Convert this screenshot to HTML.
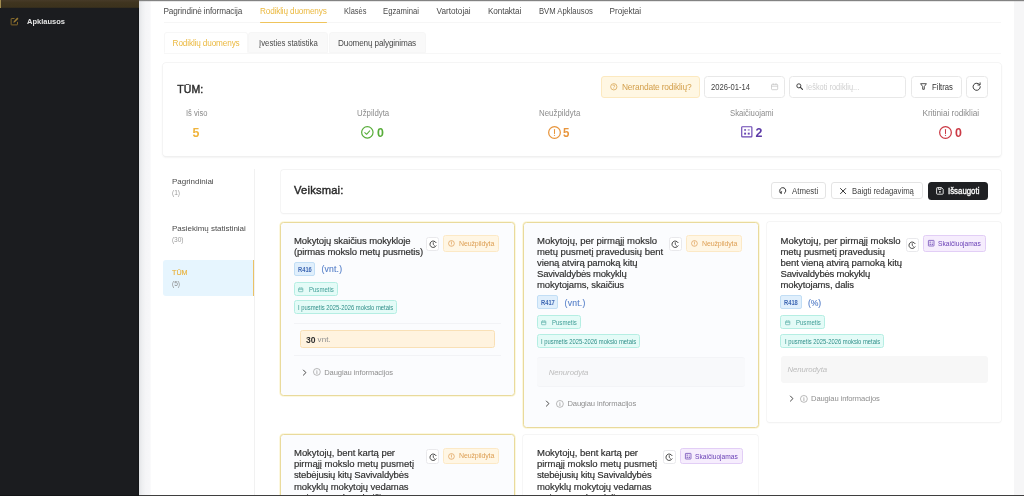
<!DOCTYPE html>
<html lang="lt">
<head>
<meta charset="utf-8">
<title>Rodiklių duomenys</title>
<style>
html,body{margin:0;padding:0}
body{width:1024px;height:496px;overflow:hidden;background:#fff;position:relative;font-family:"Liberation Sans", sans-serif;}
div,svg,span.t,.abs{position:absolute;box-sizing:border-box}
span.t{white-space:pre;line-height:14px;height:14px;transform-origin:0 50%}
svg{overflow:visible}
#app{position:absolute;left:0;top:0;width:1024px;height:496px;overflow:hidden;will-change:transform}
</style>
</head>
<body>
<main id="app">
<aside class="abs" style="left:0;top:0;width:139px;height:496px;background:linear-gradient(90deg,#1b1c1f,#1b1c1f 137px,#141517)">
<div style="left:0px;top:0px;width:139px;height:8px;background:linear-gradient(#473b28,#3f341f 35%,#3c321d 85%,#2f2a1e)"></div>
<div style="left:0px;top:0px;width:1.3px;height:7.6px;background:#a08a4e"></div>
<svg style="left:9.6px;top:16.6px" width="9" height="9" viewBox="0 0 24 24" ><path d="M20 13v7a1 1 0 0 1-1 1H4a1 1 0 0 1-1-1V5a1 1 0 0 1 1-1h8" fill="none" stroke="#86692a" stroke-width="2.6"/><path d="M9 15l1-4 9.5-9.5 3 3L13 14z" fill="#9a7b33"/></svg>
<span class="t" style="left:26.8px;top:15.32px;font-size:8px;color:#e4e4e4;transform:scaleX(0.939);font-weight:700;">Apklausos</span>
</aside>
<div style="left:139px;top:0px;width:12px;height:496px;background:linear-gradient(90deg,#e2e3e6,#eeeff1 25%,#f5f5f7 55%,#f7f7f9 90%,#fcfcfd)"></div>
<div style="left:1014px;top:0px;width:10px;height:496px;background:#f6f6f7"></div>
<div style="left:139px;top:0px;width:885px;height:1.1px;background:linear-gradient(#777,#8e8e8e)"></div>
<div style="left:139px;top:1.1px;width:885px;height:0.9px;background:linear-gradient(rgba(150,150,150,.45),rgba(200,200,200,0))"></div>
<nav class="abs" style="left:0;top:0">
<span class="t" style="left:163.5px;top:4.94px;font-size:8.2px;color:#4a4a4a;letter-spacing:-0.105px;">Pagrindinė informacija</span>
<span class="t" style="left:260px;top:4.94px;font-size:8.2px;color:#ebb940;letter-spacing:-0.152px;">Rodiklių duomenys</span>
<span class="t" style="left:343.6px;top:4.94px;font-size:8.2px;color:#4a4a4a;transform:scaleX(0.9114);">Klasės</span>
<span class="t" style="left:383.2px;top:4.94px;font-size:8.2px;color:#4a4a4a;transform:scaleX(0.9416);">Egzaminai</span>
<span class="t" style="left:436.6px;top:4.94px;font-size:8.2px;color:#4a4a4a;">Vartotojai</span>
<span class="t" style="left:488px;top:4.94px;font-size:8.2px;color:#4a4a4a;letter-spacing:-0.105px;">Kontaktai</span>
<span class="t" style="left:538.8px;top:4.94px;font-size:8.2px;color:#4a4a4a;transform:scaleX(0.9382);">BVM Apklausos</span>
<span class="t" style="left:609.6px;top:4.94px;font-size:8.2px;color:#4a4a4a;letter-spacing:-0.051px;">Projektai</span>
<div style="left:163.5px;top:22.1px;width:837.0px;height:1.0px;background:#f6f6f6"></div>
<div style="left:260px;top:22.1px;width:66.8px;height:1.4px;background:#efc45c;border-radius:1px"></div>
</nav>
<div style="left:163.5px;top:52.6px;width:837.0px;height:0.8px;background:#f7f7f7"></div>
<div style="left:163.5px;top:32px;width:84.5px;height:21.4px;background:#fff;border:0.8px solid #f7f7f7;border-bottom-color:#fff;border-radius:3px 3px 0 0"></div>
<div style="left:248.2px;top:32px;width:80.2px;height:21.2px;background:#f9f9f9;border:0.8px solid #f6f6f6;border-radius:3px 3px 0 0"></div>
<div style="left:328.8px;top:32px;width:97.4px;height:21.2px;background:#f9f9f9;border:0.8px solid #f6f6f6;border-radius:3px 3px 0 0"></div>
<span class="t" style="left:172.6px;top:36.74px;font-size:8.2px;color:#ebb940;letter-spacing:-0.129px;">Rodiklių duomenys</span>
<span class="t" style="left:259.2px;top:36.74px;font-size:8.2px;color:#4a4a4a;transform:scaleX(0.9501);">Įvesties statistika</span>
<span class="t" style="left:338px;top:36.74px;font-size:8.2px;color:#4a4a4a;letter-spacing:-0.159px;">Duomenų palyginimas</span>
<div style="left:163.3px;top:62.5px;width:837.5px;height:93.3px;background:#fff;border-radius:3px;box-shadow:0 0 0 .7px #f2f2f2,0 1px 2.500px rgba(0,0,0,.10),0 1px 2px rgba(0,0,0,.04)"></div>
<span class="t" style="left:177.2px;top:82.44px;font-size:10.5px;color:#2b2b2b;letter-spacing:0.132px;-webkit-text-stroke:.42px #2b2b2b;">TŪM:</span>
<div style="left:601.2px;top:76px;width:98.6px;height:21.6px;background:#fff7e3;border:0.8px solid #fce9c0;border-radius:3px"></div>
<svg style="left:610px;top:83.3px" width="7.6" height="7.6" viewBox="0 0 24 24" ><circle cx="12" cy="12" r="10" fill="none" stroke="#d6a24e" stroke-width="2.4"/><path d="M9 9.5a3 3 0 1 1 4.2 2.7c-.8.4-1.2 1-1.2 1.8v.5" fill="none" stroke="#d6a24e" stroke-width="2.2"/><circle cx="12" cy="17.6" r="1.4" fill="#d6a24e"/></svg>
<span class="t" style="left:621.9px;top:79.66px;font-size:8.4px;color:#d39f4b;letter-spacing:-0.16px;">Nerandate rodiklių?</span>
<div style="left:704.4px;top:76px;width:80.4px;height:21.6px;background:#fff;border:0.8px solid #e8e8e8;border-radius:3.5px"></div>
<span class="t" style="left:710.8px;top:80.54px;font-size:8.2px;color:#444;transform:scaleX(0.931);">2026-01-14</span>
<svg style="left:771.4px;top:82.8px" width="7.2" height="7.2" viewBox="0 0 14 14" ><rect x="1" y="2.600" width="12" height="10.400" rx="1.400" fill="none" stroke="#c6c6c6" stroke-width="1.500"/><path d="M1 6.200h12M4.300 .800v3M9.700 .800v3" stroke="#c6c6c6" stroke-width="1.500" fill="none"/></svg>
<div style="left:789.3px;top:76px;width:117.1px;height:21.6px;background:#fff;border:0.8px solid #e8e8e8;border-radius:3.5px"></div>
<svg style="left:796.2px;top:83.2px" width="7" height="7" viewBox="0 0 14 14" ><circle cx="5.700" cy="5.700" r="4.100" fill="none" stroke="#383838" stroke-width="1.900"/><path d="M8.900 8.900L12.900 12.900" stroke="#383838" stroke-width="2.300" stroke-linecap="round"/></svg>
<span class="t" style="left:805.8px;top:80.54px;font-size:8.2px;color:#cfcfcf;transform:scaleX(0.9063);">Ieškoti rodiklių...</span>
<div style="left:911.2px;top:76px;width:50.4px;height:21.6px;background:#fff;border:0.8px solid #e8e8e8;border-radius:3.5px"></div>
<svg style="left:920.1px;top:83.3px" width="7" height="7" viewBox="0 0 14 14" ><path d="M1.200 1.400h11.600l-4.200 5.800v5.400h-3.200v-5.400z" fill="none" stroke="#333" stroke-width="1.700" stroke-linejoin="round"/></svg>
<span class="t" style="left:931.9px;top:80.15px;font-size:8.3px;color:#333;transform:scaleX(0.925);">Filtras</span>
<div style="left:966.2px;top:76px;width:21.4px;height:21.6px;background:#fff;border:0.8px solid #e8e8e8;border-radius:3.5px"></div>
<svg style="left:972.3px;top:82.05px" width="9.4" height="9.4" viewBox="0 0 18.800 18.800" ><path d="M15.300 5.400A7.200 7.200 0 1 0 16.600 9.400" fill="none" stroke="#333" stroke-width="1.900" stroke-linecap="round"/><path d="M16.200 1.600v4.400h-4.400" fill="none" stroke="#333" stroke-width="1.900" stroke-linecap="round" stroke-linejoin="round"/></svg>
<span class="t" style="left:185.6px;top:106.05px;font-size:8.3px;color:#8c8c8c;transform:scaleX(0.91);">Iš viso</span>
<span class="t" style="left:192.6px;top:125.92px;font-size:12.4px;color:#f0b43c;letter-spacing:-0.106px;font-weight:700;">5</span>
<span class="t" style="left:356.6px;top:106.05px;font-size:8.3px;color:#8c8c8c;transform:scaleX(0.9436);">Užpildyta</span>
<svg style="left:361px;top:126.1px" width="12.7" height="12.7" viewBox="0 0 24 24" ><circle cx="12" cy="12" r="10.800" fill="none" stroke="#58ad3a" stroke-width="2.300"/><path d="M7.200 12.400l3.300 3.300 6-6.600" fill="none" stroke="#58ad3a" stroke-width="1.9" stroke-linecap="round" stroke-linejoin="round"/></svg>
<span class="t" style="left:376.9px;top:125.92px;font-size:12.4px;color:#58ad3a;letter-spacing:-0.306px;font-weight:700;">0</span>
<span class="t" style="left:538.7px;top:106.05px;font-size:8.3px;color:#8c8c8c;transform:scaleX(0.9525);">Neužpildyta</span>
<svg style="left:547.9px;top:126px" width="13" height="13" viewBox="0 0 24 24" ><circle cx="12" cy="12" r="10.800" fill="none" stroke="#e8953c" stroke-width="2.300"/><path d="M12 6.500v7.500" stroke="#e8953c" stroke-width="1.9" stroke-linecap="round"/><circle cx="12" cy="17.300" r="1.200" fill="#e8953c"/></svg>
<span class="t" style="left:563.4px;top:125.92px;font-size:12.4px;color:#e8953c;transform:scaleX(0.9267);font-weight:700;">5</span>
<span class="t" style="left:729.6px;top:106.05px;font-size:8.3px;color:#8c8c8c;transform:scaleX(0.9318);">Skaičiuojami</span>
<svg style="left:740.6px;top:126.4px" width="11.6" height="11.6" viewBox="0 0 24 24" ><rect x="1.500" y="1.500" width="21" height="21" rx="1.500" fill="none" stroke="#6a45b3" stroke-width="2.4"/><path d="M6.500 8.200h4M8.500 6.200v4M14 8.200h4" stroke="#6a45b3" stroke-width="1.900" fill="none"/><rect x="6.500" y="13.800" width="4" height="4" fill="#6a45b3"/><rect x="14" y="13.800" width="4" height="4" fill="#6a45b3"/></svg>
<span class="t" style="left:755.6px;top:125.92px;font-size:12.4px;color:#5c3aa6;letter-spacing:-0.306px;font-weight:700;">2</span>
<span class="t" style="left:922.6px;top:106.05px;font-size:8.3px;color:#8c8c8c;letter-spacing:-0.065px;">Kritiniai rodikliai</span>
<svg style="left:939px;top:126px" width="13" height="13" viewBox="0 0 24 24" ><circle cx="12" cy="12" r="10.800" fill="none" stroke="#cb3a45" stroke-width="2.300"/><path d="M12 6.500v7.500" stroke="#cb3a45" stroke-width="1.900" stroke-linecap="round"/><circle cx="12" cy="17.300" r="1.200" fill="#cb3a45"/></svg>
<span class="t" style="left:955px;top:125.92px;font-size:12.4px;color:#cb3a45;letter-spacing:0.094px;font-weight:700;">0</span>
<div style="left:254.2px;top:168.5px;width:0.8px;height:327.5px;background:#f1f1f1"></div>
<span class="t" style="left:172px;top:175.12px;font-size:8px;color:#4a4a4a;letter-spacing:-0.018px;">Pagrindiniai</span>
<span class="t" style="left:172px;top:186.04px;font-size:6.6px;color:#9a9a9a;letter-spacing:-0.021px;">(1)</span>
<span class="t" style="left:172px;top:222.02px;font-size:8px;color:#4a4a4a;letter-spacing:-0.02px;">Pasiekimų statistiniai</span>
<span class="t" style="left:172px;top:232.94px;font-size:6.6px;color:#9a9a9a;letter-spacing:-0.084px;">(30)</span>
<div style="left:162.8px;top:260.2px;width:91.7px;height:36.2px;background:#e6f5fe;border-right:1.600px solid #ebc266;border-radius:3px 0 0 3px;box-sizing:border-box"></div>
<span class="t" style="left:172px;top:266.32px;font-size:8px;color:#e9b23c;transform:scaleX(0.9003);-webkit-text-stroke:.15px #e9b23c;">TŪM</span>
<span class="t" style="left:172px;top:277.04px;font-size:6.6px;color:#8a8a8a;letter-spacing:-0.021px;">(5)</span>
<div style="left:281px;top:169.5px;width:720px;height:43.5px;background:#fff;border-radius:2.500px;box-shadow:0 0 0 .7px #f1f1f1,0 1px 2px rgba(0,0,0,.06)"></div>
<span class="t" style="left:294px;top:182.96px;font-size:11.2px;color:#2b2b2b;letter-spacing:0.192px;-webkit-text-stroke:.42px #2b2b2b;">Veiksmai:</span>
<div style="left:771.2px;top:182.2px;width:55.0px;height:17.3px;background:#fff;border:0.8px solid #e4e4e4;border-radius:3px"></div>
<svg style="left:779.3px;top:187.1px" width="7.5" height="7.5" viewBox="0 0 15 15" ><path d="M4.200 12.600A6.100 6.100 0 1 1 10.800 12.600" fill="none" stroke="#333" stroke-width="2" stroke-linecap="round"/><path d="M1.500 10.200l2.700 2.900 .900-3.900" fill="none" stroke="#333" stroke-width="1.800" stroke-linejoin="round" stroke-linecap="round"/></svg>
<span class="t" style="left:791.8px;top:184.15px;font-size:8.3px;color:#444;transform:scaleX(0.9468);">Atmesti</span>
<div style="left:831.4px;top:182.2px;width:91.2px;height:17.3px;background:#fff;border:0.8px solid #e4e4e4;border-radius:3px"></div>
<svg style="left:840.4px;top:188.15px" width="6.2" height="6.2" viewBox="0 0 12.400 12.400" ><path d="M1 1l10.400 10.400M11.400 1L1 11.400" stroke="#333" stroke-width="2" stroke-linecap="round"/></svg>
<span class="t" style="left:851.9px;top:184.15px;font-size:8.3px;color:#444;transform:scaleX(0.9319);">Baigti redagavimą</span>
<div style="left:927.5px;top:182.3px;width:60.3px;height:17.3px;background:#1f2023;border-radius:3.5px"></div>
<svg style="left:936px;top:187.2px" width="7.8" height="7.8" viewBox="0 0 15.600 15.600" ><path d="M1.200 2.600a1.400 1.400 0 0 1 1.400-1.400h8.400l3.400 3.400v8.400a1.400 1.400 0 0 1-1.400 1.400h-10.400a1.400 1.400 0 0 1-1.400-1.400z" fill="none" stroke="#fff" stroke-width="1.700"/><path d="M4.600 1.200v3.600h5.400v-3.600" fill="none" stroke="#fff" stroke-width="1.700"/><circle cx="7.800" cy="9.600" r="1.700" fill="#fff"/></svg>
<span class="t" style="left:948px;top:184.15px;font-size:8.3px;color:#fff;transform:scaleX(0.9452);-webkit-text-stroke:.3px #fff;">Išsaugoti</span>
<div style="left:280px;top:222px;width:235.4px;height:174.2px;background:#fbfcfe;border:1px solid #e9da9c;border-radius:3.500px;box-sizing:border-box;box-shadow:0 0 0 .8px #fcf6d6"></div>
<span class="t" style="left:294px;top:233.91px;font-size:9.5px;color:#303030;letter-spacing:-0.105px;-webkit-text-stroke:.18px #303030;">Mokytojų skaičius mokykloje</span>
<span class="t" style="left:294px;top:244.94px;font-size:9.5px;color:#303030;letter-spacing:-0.103px;-webkit-text-stroke:.18px #303030;">(pirmas mokslo metų pusmetis)</span>
<div style="left:426.4px;top:236.9px;width:13.0px;height:14.6px;background:#fff;border:0.8px solid #e9e9ec;border-radius:2.500px"></div>
<svg style="left:428.5px;top:240.4px" width="8.5" height="8.5" viewBox="0 0 24 24" ><path d="M19.970 16.600A9.200 9.200 0 1 1 19.970 7.400" fill="none" stroke="#333" stroke-width="2.600" stroke-linecap="round"/><path d="M12 7.500v5l3 2.600" fill="none" stroke="#333" stroke-width="2.300" stroke-linecap="round" stroke-linejoin="round"/></svg>
<div style="left:443.2px;top:235.3px;width:55.4px;height:16.5px;background:#fff6e4;border:0.8px solid #fce9c6;border-radius:2.500px"></div>
<svg style="left:448.09999999999997px;top:240.10000000000002px" width="6.9" height="6.9" viewBox="0 0 24 24" ><circle cx="12" cy="12" r="10" fill="none" stroke="#dd9d55" stroke-width="2.500"/><path d="M12 6.500v7" stroke="#dd9d55" stroke-width="2.400" stroke-linecap="round"/><circle cx="12" cy="17.200" r="1.400" fill="#dd9d55"/></svg>
<span class="t" style="left:459.0px;top:236.73px;font-size:7px;color:#dd9f54;letter-spacing:-0.125px;">Neužpildyta</span>
<div style="left:293.5px;top:261.5px;width:21.8px;height:14.1px;background:#e0effc;border:0.8px solid #c2def5;border-radius:2px"></div>
<span class="t" style="left:297.5px;top:262.69px;font-size:6.6px;color:#3f68b4;transform:scaleX(0.8753);font-weight:700;">R416</span>
<span class="t" style="left:321.4px;top:262.37px;font-size:8.6px;color:#557fc8;letter-spacing:0.22px;-webkit-text-stroke:.12px #557fc8;">(vnt.)</span>
<div style="left:293.5px;top:281.8px;width:44.4px;height:14.1px;background:#e4fbf7;border:0.8px solid #b5eee3;border-radius:2.500px"></div>
<svg style="left:297.8px;top:286.8px" width="5.4" height="5.4" viewBox="0 0 24 24" ><rect x="2.500" y="5" width="19" height="16" rx="2" fill="none" stroke="#4aa59e" stroke-width="2.600"/><path d="M2.500 10.500h19M7.500 2v4M16.500 2v4" stroke="#4aa59e" stroke-width="2.600" fill="none"/></svg>
<span class="t" style="left:309.0px;top:282.73px;font-size:7px;color:#3f9d96;transform:scaleX(0.8612);">Pusmetis</span>
<div style="left:293.5px;top:300.4px;width:103.4px;height:14.1px;background:#e4fbf7;border:0.8px solid #b5eee3;border-radius:2.500px"></div>
<span class="t" style="left:298.0px;top:301.2px;font-size:6.7px;color:#2f8f89;transform:scaleX(0.874);">I pusmetis 2025-2026 mokslo metais</span>
<div style="left:294px;top:322.6px;width:206.5px;height:0.8px;background:#f2f3f6"></div>
<div style="left:294px;top:355.2px;width:206.5px;height:0.8px;background:#f2f3f6"></div>
<div style="left:300.2px;top:329.7px;width:194.6px;height:18.8px;background:#fff3df;border:0.8px solid #f9e0b6;border-radius:2.500px"></div>
<span class="t" style="left:305.8px;top:333.21px;font-size:9px;color:#2e2e2e;transform:scaleX(0.9485);font-weight:700;">30</span>
<span class="t" style="left:317.6px;top:333.32px;font-size:8px;color:#8f8f8f;letter-spacing:0.073px;">vnt.</span>
<svg style="left:300.7px;top:368.9px" width="7.2" height="7.2" viewBox="0 0 24 24" ><path d="M8 3.500l8.500 8.500L8 20.500" fill="none" stroke="#333" stroke-width="3" stroke-linecap="round" stroke-linejoin="round"/></svg>
<svg style="left:312.9px;top:368.4px" width="7.8" height="7.8" viewBox="0 0 24 24" ><circle cx="12" cy="12" r="10.600" fill="none" stroke="#8f8f8f" stroke-width="1.900"/><path d="M12 10.800v6.400" stroke="#8f8f8f" stroke-width="2.200" stroke-linecap="round"/><circle cx="12" cy="7" r="1.300" fill="#8f8f8f"/></svg>
<span class="t" style="left:324.2px;top:365.68px;font-size:7.6px;color:#8f8f8f;letter-spacing:-0.106px;">Daugiau informacijos</span>
<div style="left:522.9px;top:222px;width:235.7px;height:205.7px;background:#fbfcfe;border:1px solid #e9da9c;border-radius:3.500px;box-sizing:border-box;box-shadow:0 0 0 .8px #fcf6d6"></div>
<span class="t" style="left:537px;top:233.91px;font-size:9.5px;color:#303030;letter-spacing:-0.013px;-webkit-text-stroke:.18px #303030;">Mokytojų, per pirmąjį mokslo</span>
<span class="t" style="left:537px;top:244.94px;font-size:9.5px;color:#303030;letter-spacing:-0.046px;-webkit-text-stroke:.18px #303030;">metų pusmetį pravedusių bent</span>
<span class="t" style="left:537px;top:255.97px;font-size:9.5px;color:#303030;letter-spacing:-0.081px;-webkit-text-stroke:.18px #303030;">vieną atvirą pamoką kitų</span>
<span class="t" style="left:537px;top:267.0px;font-size:9.5px;color:#303030;letter-spacing:-0.198px;-webkit-text-stroke:.18px #303030;">Savivaldybės mokyklų</span>
<span class="t" style="left:537px;top:278.03px;font-size:9.5px;color:#303030;letter-spacing:-0.138px;-webkit-text-stroke:.18px #303030;">mokytojams, skaičius</span>
<div style="left:669.1px;top:236.9px;width:13.0px;height:14.6px;background:#fff;border:0.8px solid #e9e9ec;border-radius:2.500px"></div>
<svg style="left:671.2px;top:240.4px" width="8.5" height="8.5" viewBox="0 0 24 24" ><path d="M19.970 16.600A9.200 9.200 0 1 1 19.970 7.400" fill="none" stroke="#333" stroke-width="2.600" stroke-linecap="round"/><path d="M12 7.500v5l3 2.600" fill="none" stroke="#333" stroke-width="2.300" stroke-linecap="round" stroke-linejoin="round"/></svg>
<div style="left:686.2px;top:235.3px;width:55.4px;height:16.5px;background:#fff6e4;border:0.8px solid #fce9c6;border-radius:2.500px"></div>
<svg style="left:691.1px;top:240.10000000000002px" width="6.9" height="6.9" viewBox="0 0 24 24" ><circle cx="12" cy="12" r="10" fill="none" stroke="#dd9d55" stroke-width="2.500"/><path d="M12 6.500v7" stroke="#dd9d55" stroke-width="2.400" stroke-linecap="round"/><circle cx="12" cy="17.200" r="1.400" fill="#dd9d55"/></svg>
<span class="t" style="left:702.0px;top:236.73px;font-size:7px;color:#dd9f54;letter-spacing:-0.125px;">Neužpildyta</span>
<div style="left:536.7px;top:295.0px;width:21.8px;height:14.1px;background:#e0effc;border:0.8px solid #c2def5;border-radius:2px"></div>
<span class="t" style="left:540.7px;top:296.19px;font-size:6.6px;color:#3f68b4;transform:scaleX(0.8753);font-weight:700;">R417</span>
<span class="t" style="left:564.6px;top:295.87px;font-size:8.6px;color:#557fc8;letter-spacing:0.22px;-webkit-text-stroke:.12px #557fc8;">(vnt.)</span>
<div style="left:536.7px;top:315.20000000000005px;width:44.4px;height:14.1px;background:#e4fbf7;border:0.8px solid #b5eee3;border-radius:2.500px"></div>
<svg style="left:541px;top:320.20000000000005px" width="5.4" height="5.4" viewBox="0 0 24 24" ><rect x="2.500" y="5" width="19" height="16" rx="2" fill="none" stroke="#4aa59e" stroke-width="2.600"/><path d="M2.500 10.500h19M7.500 2v4M16.500 2v4" stroke="#4aa59e" stroke-width="2.600" fill="none"/></svg>
<span class="t" style="left:552.2px;top:316.13px;font-size:7px;color:#3f9d96;transform:scaleX(0.8612);">Pusmetis</span>
<div style="left:536.7px;top:333.8px;width:103.4px;height:14.1px;background:#e4fbf7;border:0.8px solid #b5eee3;border-radius:2.500px"></div>
<span class="t" style="left:541.2px;top:334.6px;font-size:6.7px;color:#2f8f89;transform:scaleX(0.874);">I pusmetis 2025-2026 mokslo metais</span>
<div style="left:537px;top:357px;width:208px;height:30px;background:#f8f9fb;border-radius:3px;border-top:0.8px solid #f3f4f7;border-bottom:0.8px solid #f3f4f7"></div>
<span class="t" style="left:548.8px;top:365.7px;font-size:7.8px;color:#bdbdbd;letter-spacing:-0.081px;font-style:italic;">Nenurodyta</span>
<svg style="left:543.9px;top:400.4px" width="7.2" height="7.2" viewBox="0 0 24 24" ><path d="M8 3.500l8.500 8.500L8 20.500" fill="none" stroke="#333" stroke-width="3" stroke-linecap="round" stroke-linejoin="round"/></svg>
<svg style="left:556.1px;top:399.9px" width="7.8" height="7.8" viewBox="0 0 24 24" ><circle cx="12" cy="12" r="10.600" fill="none" stroke="#8f8f8f" stroke-width="1.900"/><path d="M12 10.800v6.400" stroke="#8f8f8f" stroke-width="2.200" stroke-linecap="round"/><circle cx="12" cy="7" r="1.300" fill="#8f8f8f"/></svg>
<span class="t" style="left:567.4px;top:397.18px;font-size:7.6px;color:#8f8f8f;letter-spacing:-0.106px;">Daugiau informacijos</span>
<div style="left:767.3px;top:222.3px;width:233.7px;height:199.7px;background:#fff;border-radius:2.500px;box-shadow:0 0 0 .7px #f2f2f2,0 1px 2px rgba(0,0,0,.05)"></div>
<span class="t" style="left:780.5px;top:234.3px;font-size:9.5px;color:#303030;letter-spacing:-0.013px;-webkit-text-stroke:.18px #303030;">Mokytojų, per pirmąjį mokslo</span>
<span class="t" style="left:780.5px;top:245.33px;font-size:9.5px;color:#303030;letter-spacing:-0.071px;-webkit-text-stroke:.18px #303030;">metų pusmetį pravedusių</span>
<span class="t" style="left:780.5px;top:256.37px;font-size:9.5px;color:#303030;letter-spacing:-0.072px;-webkit-text-stroke:.18px #303030;">bent vieną atvirą pamoką kitų</span>
<span class="t" style="left:780.5px;top:267.39px;font-size:9.5px;color:#303030;letter-spacing:-0.198px;-webkit-text-stroke:.18px #303030;">Savivaldybės mokyklų</span>
<span class="t" style="left:780.5px;top:278.43px;font-size:9.5px;color:#303030;letter-spacing:-0.118px;-webkit-text-stroke:.18px #303030;">mokytojams, dalis</span>
<div style="left:906.1px;top:237.5px;width:13.0px;height:14.6px;background:#fff;border:0.8px solid #e9e9ec;border-radius:2.500px"></div>
<svg style="left:908.2px;top:241.0px" width="8.5" height="8.5" viewBox="0 0 24 24" ><path d="M19.970 16.600A9.200 9.200 0 1 1 19.970 7.400" fill="none" stroke="#333" stroke-width="2.600" stroke-linecap="round"/><path d="M12 7.500v5l3 2.600" fill="none" stroke="#333" stroke-width="2.300" stroke-linecap="round" stroke-linejoin="round"/></svg>
<div style="left:923.2px;top:235.2px;width:63.0px;height:16.6px;background:#f6edfd;border:0.8px solid #e2cef6;border-radius:2.500px"></div>
<svg style="left:928.4000000000001px;top:240.39999999999998px" width="6.4" height="6.4" viewBox="0 0 24 24" ><rect x="1.500" y="1.500" width="21" height="21" rx="1.500" fill="none" stroke="#6a45b3" stroke-width="2.800"/><path d="M6 8.200h4.500M8.200 6v4.500M13.800 8.200h4.500" stroke="#6a45b3" stroke-width="2.200" fill="none"/><rect x="6" y="13.800" width="4.500" height="4.500" fill="#6a45b3"/><rect x="13.800" y="13.800" width="4.500" height="4.500" fill="#6a45b3"/></svg>
<span class="t" style="left:938.4px;top:237.43px;font-size:7px;color:#6a40b6;transform:scaleX(0.9481);">Skaičiuojamas</span>
<div style="left:780.2px;top:295.1px;width:21.8px;height:14.1px;background:#e0effc;border:0.8px solid #c2def5;border-radius:2px"></div>
<span class="t" style="left:784.2px;top:296.29px;font-size:6.6px;color:#3f68b4;transform:scaleX(0.8753);font-weight:700;">R418</span>
<span class="t" style="left:808.1px;top:295.97px;font-size:8.6px;color:#557fc8;letter-spacing:-0.158px;-webkit-text-stroke:.12px #557fc8;">(%)</span>
<div style="left:780.2px;top:315.20000000000005px;width:44.4px;height:14.1px;background:#e4fbf7;border:0.8px solid #b5eee3;border-radius:2.500px"></div>
<svg style="left:784.5px;top:320.20000000000005px" width="5.4" height="5.4" viewBox="0 0 24 24" ><rect x="2.500" y="5" width="19" height="16" rx="2" fill="none" stroke="#4aa59e" stroke-width="2.600"/><path d="M2.500 10.500h19M7.500 2v4M16.500 2v4" stroke="#4aa59e" stroke-width="2.600" fill="none"/></svg>
<span class="t" style="left:795.7px;top:316.13px;font-size:7px;color:#3f9d96;transform:scaleX(0.8612);">Pusmetis</span>
<div style="left:780.2px;top:333.8px;width:103.4px;height:14.1px;background:#e4fbf7;border:0.8px solid #b5eee3;border-radius:2.500px"></div>
<span class="t" style="left:784.7px;top:334.6px;font-size:6.7px;color:#2f8f89;transform:scaleX(0.874);">I pusmetis 2025-2026 mokslo metais</span>
<div style="left:780.5px;top:356.2px;width:207.5px;height:26.8px;background:#f7f7f7;border-radius:3px"></div>
<span class="t" style="left:787.5px;top:363.1px;font-size:7.8px;color:#bdbdbd;letter-spacing:-0.081px;font-style:italic;">Nenurodyta</span>
<svg style="left:787.5px;top:395.29999999999995px" width="7.2" height="7.2" viewBox="0 0 24 24" ><path d="M8 3.500l8.500 8.500L8 20.500" fill="none" stroke="#333" stroke-width="3" stroke-linecap="round" stroke-linejoin="round"/></svg>
<svg style="left:799.7px;top:394.79999999999995px" width="7.8" height="7.8" viewBox="0 0 24 24" ><circle cx="12" cy="12" r="10.600" fill="none" stroke="#8f8f8f" stroke-width="1.900"/><path d="M12 10.800v6.400" stroke="#8f8f8f" stroke-width="2.200" stroke-linecap="round"/><circle cx="12" cy="7" r="1.300" fill="#8f8f8f"/></svg>
<span class="t" style="left:811px;top:392.08px;font-size:7.6px;color:#8f8f8f;letter-spacing:-0.106px;">Daugiau informacijos</span>
<div style="left:280px;top:434.4px;width:235.4px;height:85.6px;background:#fbfcfe;border:1px solid #e9da9c;border-radius:3.500px;box-sizing:border-box;box-shadow:0 0 0 .8px #fcf6d6"></div>
<span class="t" style="left:294px;top:446.41px;font-size:9.5px;color:#303030;letter-spacing:-0.038px;-webkit-text-stroke:.18px #303030;">Mokytojų, bent kartą per</span>
<span class="t" style="left:294px;top:457.44px;font-size:9.5px;color:#303030;letter-spacing:-0.014px;-webkit-text-stroke:.18px #303030;">pirmąjį mokslo metų pusmetį</span>
<span class="t" style="left:294px;top:468.47px;font-size:9.5px;color:#303030;letter-spacing:-0.155px;-webkit-text-stroke:.18px #303030;">stebėjusių kitų Savivaldybės</span>
<span class="t" style="left:294px;top:479.5px;font-size:9.5px;color:#303030;letter-spacing:-0.091px;-webkit-text-stroke:.18px #303030;">mokyklų mokytojų vedamas</span>
<span class="t" style="left:294px;top:490.53px;font-size:9.5px;color:#303030;letter-spacing:-0.075px;-webkit-text-stroke:.18px #303030;">atvirą pamoką, skaičius</span>
<div style="left:426.4px;top:449.4px;width:13.0px;height:14.6px;background:#fff;border:0.8px solid #e9e9ec;border-radius:2.500px"></div>
<svg style="left:428.5px;top:452.9px" width="8.5" height="8.5" viewBox="0 0 24 24" ><path d="M19.970 16.600A9.200 9.200 0 1 1 19.970 7.400" fill="none" stroke="#333" stroke-width="2.600" stroke-linecap="round"/><path d="M12 7.500v5l3 2.600" fill="none" stroke="#333" stroke-width="2.300" stroke-linecap="round" stroke-linejoin="round"/></svg>
<div style="left:443.2px;top:447.8px;width:55.4px;height:16.5px;background:#fff6e4;border:0.8px solid #fce9c6;border-radius:2.500px"></div>
<svg style="left:448.09999999999997px;top:452.6px" width="6.9" height="6.9" viewBox="0 0 24 24" ><circle cx="12" cy="12" r="10" fill="none" stroke="#dd9d55" stroke-width="2.500"/><path d="M12 6.500v7" stroke="#dd9d55" stroke-width="2.400" stroke-linecap="round"/><circle cx="12" cy="17.200" r="1.400" fill="#dd9d55"/></svg>
<span class="t" style="left:459.0px;top:449.23px;font-size:7px;color:#dd9f54;letter-spacing:-0.125px;">Neužpildyta</span>
<div style="left:523.2px;top:434.8px;width:235.2px;height:85.2px;background:#fff;border-radius:2.500px;box-shadow:0 0 0 .7px #f2f2f2,0 1px 2px rgba(0,0,0,.05)"></div>
<span class="t" style="left:537px;top:446.41px;font-size:9.5px;color:#303030;letter-spacing:-0.038px;-webkit-text-stroke:.18px #303030;">Mokytojų, bent kartą per</span>
<span class="t" style="left:537px;top:457.44px;font-size:9.5px;color:#303030;letter-spacing:-0.014px;-webkit-text-stroke:.18px #303030;">pirmąjį mokslo metų pusmetį</span>
<span class="t" style="left:537px;top:468.47px;font-size:9.5px;color:#303030;letter-spacing:-0.155px;-webkit-text-stroke:.18px #303030;">stebėjusių kitų Savivaldybės</span>
<span class="t" style="left:537px;top:479.5px;font-size:9.5px;color:#303030;letter-spacing:-0.091px;-webkit-text-stroke:.18px #303030;">mokyklų mokytojų vedamas</span>
<span class="t" style="left:537px;top:490.53px;font-size:9.5px;color:#303030;letter-spacing:-0.074px;-webkit-text-stroke:.18px #303030;">atvirą pamoką, dalis</span>
<div style="left:662.5px;top:449.9px;width:13.0px;height:14.6px;background:#fff;border:0.8px solid #e9e9ec;border-radius:2.500px"></div>
<svg style="left:664.6px;top:453.4px" width="8.5" height="8.5" viewBox="0 0 24 24" ><path d="M19.970 16.600A9.200 9.200 0 1 1 19.970 7.400" fill="none" stroke="#333" stroke-width="2.600" stroke-linecap="round"/><path d="M12 7.500v5l3 2.600" fill="none" stroke="#333" stroke-width="2.300" stroke-linecap="round" stroke-linejoin="round"/></svg>
<div style="left:679.6px;top:447.7px;width:63.0px;height:16.6px;background:#f6edfd;border:0.8px solid #e2cef6;border-radius:2.500px"></div>
<svg style="left:684.8000000000001px;top:452.9px" width="6.4" height="6.4" viewBox="0 0 24 24" ><rect x="1.500" y="1.500" width="21" height="21" rx="1.500" fill="none" stroke="#6a45b3" stroke-width="2.800"/><path d="M6 8.200h4.500M8.200 6v4.500M13.800 8.200h4.500" stroke="#6a45b3" stroke-width="2.200" fill="none"/><rect x="6" y="13.800" width="4.500" height="4.500" fill="#6a45b3"/><rect x="13.800" y="13.800" width="4.500" height="4.500" fill="#6a45b3"/></svg>
<span class="t" style="left:694.8px;top:449.93px;font-size:7px;color:#6a40b6;transform:scaleX(0.9481);">Skaičiuojamas</span>
<div style="left:0px;top:494.7px;width:1024px;height:1.3px;background:linear-gradient(#6a6a6a,#2e2e2e 70%)"></div>
<div style="left:0px;top:494.7px;width:139px;height:1.3px;background:#131416"></div>
</main>
</body>
</html>
